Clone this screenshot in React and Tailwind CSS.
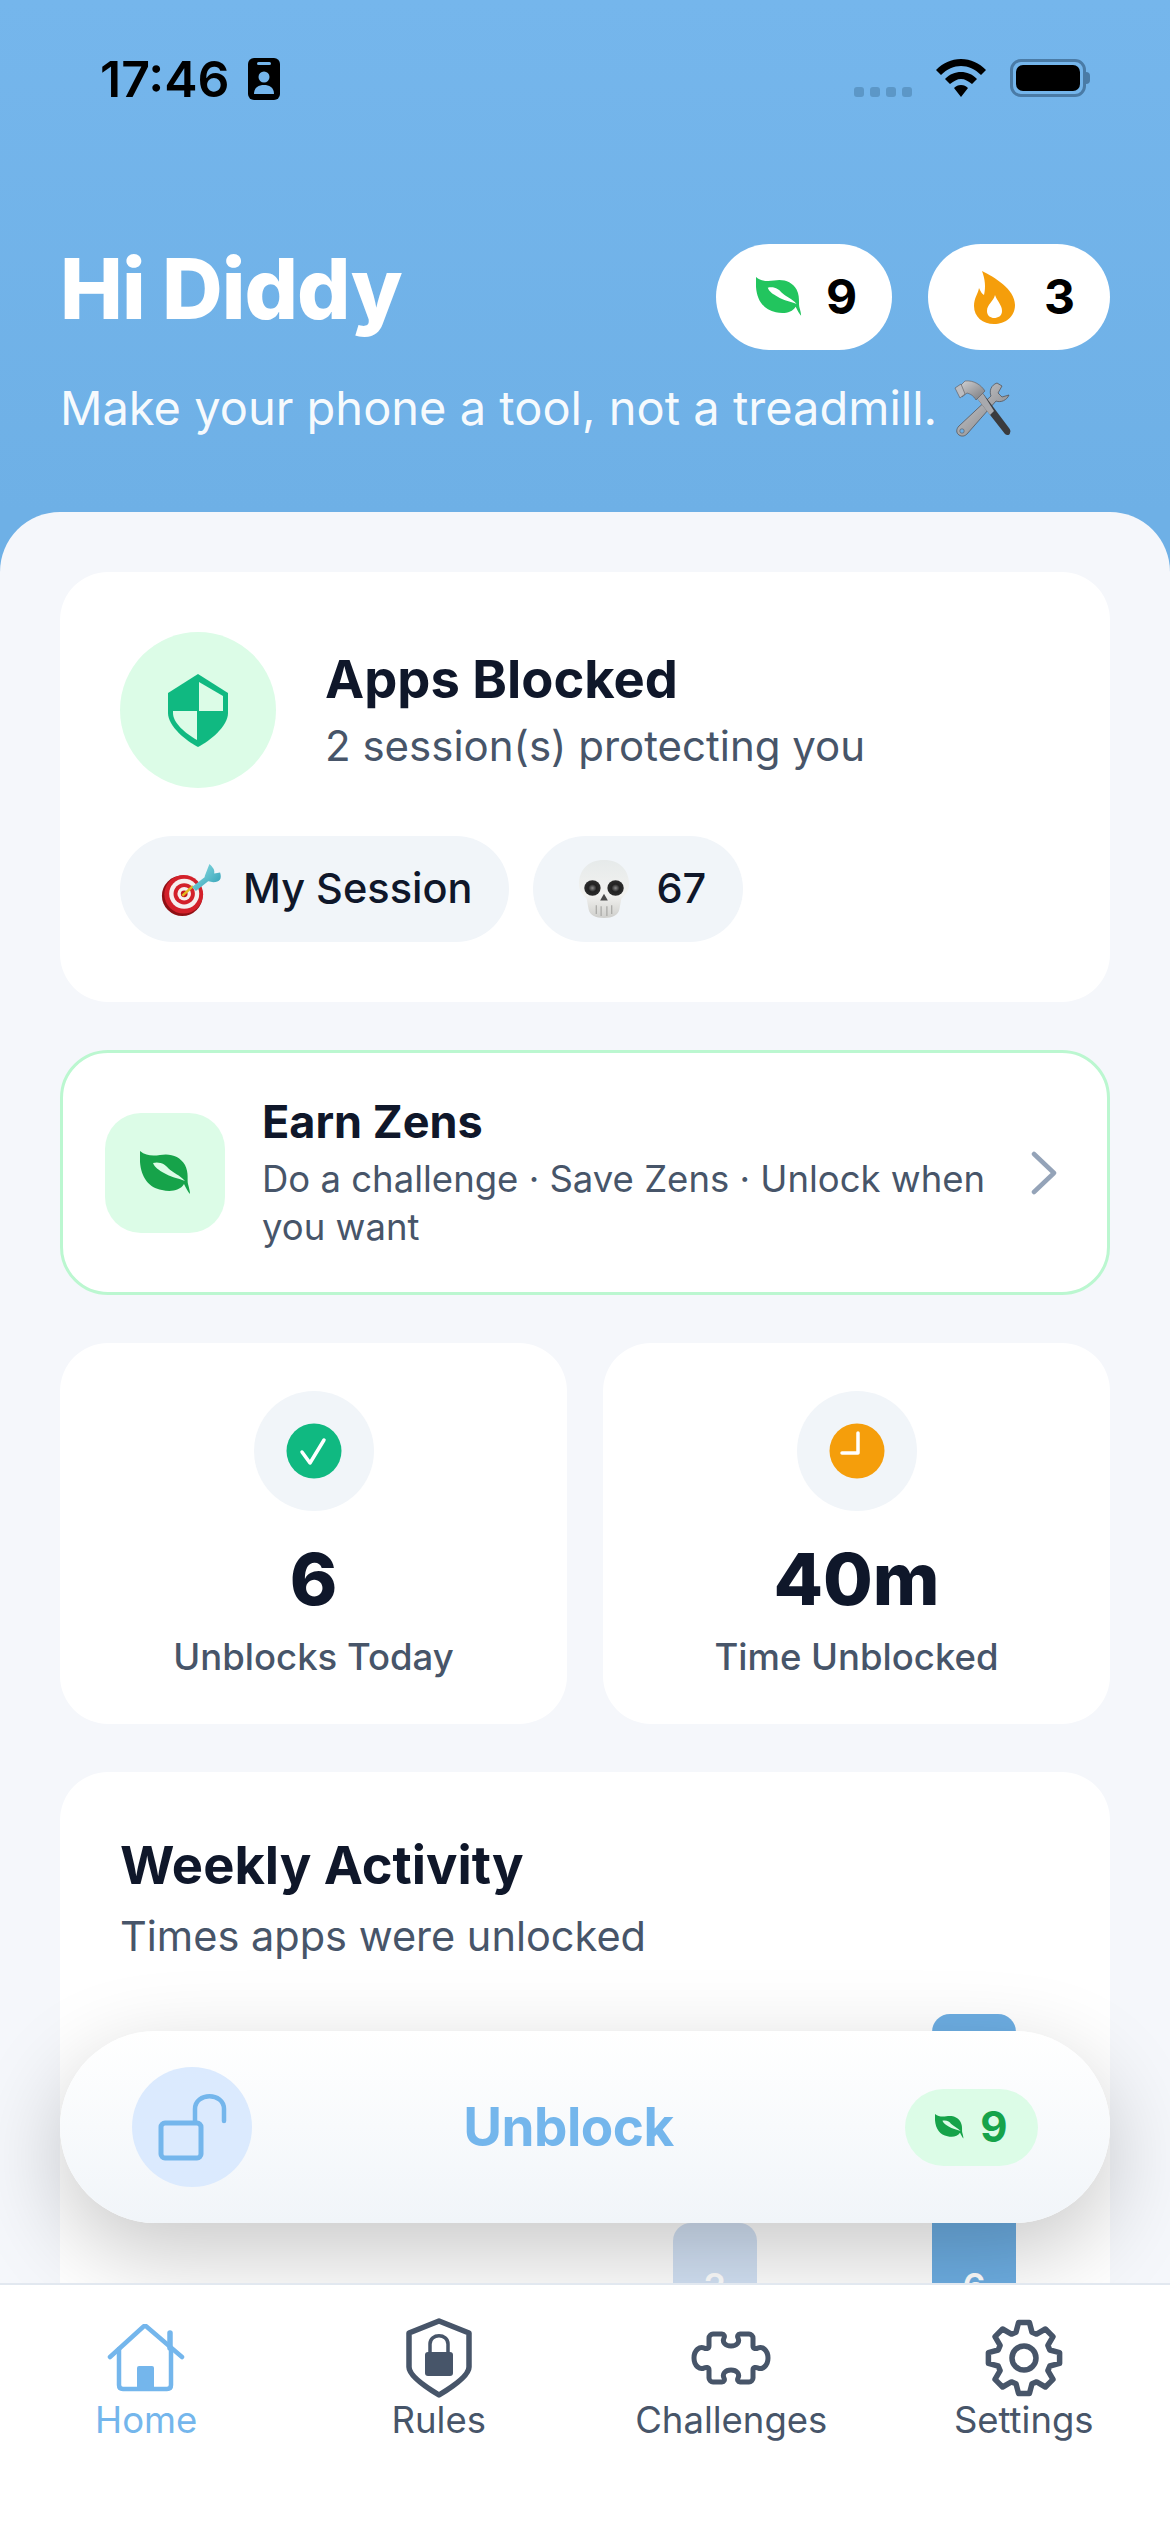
const LEAF_PATH = 'M0 0 C6 5 13 5 20 4 C30 2 40 5 45 14 C49 22 47 29 48 33 C49 37 50 40 50 43 C48 41 46 37 44 33 C40 40 30 41 22 39 C9 37 1 26 0 11 Z M13 12 C20 10 26 14 28 17 C33 22 40 24 45 30 C38 27 30 26 24 22 C19 19 15 17 13 12 Z';

const LeafIcon = ({ width, color }) => (
  <svg width={width} viewBox="0 0 51 44" className="shrink-0">
    <path d={LEAF_PATH} fill={color} fillRule="evenodd" />
  </svg>
);

const FlameIcon = () => (
  <svg width="41" height="53" viewBox="0 0 41 53" className="shrink-0">
    <path
      d="M8 0 C20 6 41 18 41 34 C41 46 31 53 20 53 C9 53 0 46 0 35 C0 27 4 23 5 17 C7 21 8 23 10 24 C12 16 11 8 8 0 Z M21 24 C20 30 13 33 13 40 C13 45 17 47 20 47 C24 47 28 45 28 40 C28 34 23 30 21 24 Z"
      fill="#f59e0b"
      fillRule="evenodd"
    />
  </svg>
);

const TargetEmoji = () => (
  <svg width="64" height="56" viewBox="0 0 66 58" preserveAspectRatio="none">
    <defs>
      <linearGradient id="fin" x1="0" y1="0" x2="1" y2="1">
        <stop offset="0" stopColor="#7fd4dc" />
        <stop offset="1" stopColor="#3aa6bb" />
      </linearGradient>
    </defs>
    <ellipse cx="24" cy="36" rx="21" ry="21" fill="#8f0f14" />
    <ellipse cx="25.5" cy="34.5" rx="20" ry="20" fill="#d3202a" />
    <circle cx="26" cy="34" r="15.5" fill="#f5efef" />
    <circle cx="26" cy="34" r="11" fill="#d3202a" />
    <circle cx="26" cy="34" r="7" fill="#f5efef" />
    <circle cx="26" cy="34" r="3.5" fill="#c4161f" />
    <path d="M24 36 L35 26" stroke="#e3b81f" strokeWidth="2.5" />
    <path d="M34 27 L48 16 L52 20 L38 31 Z" fill="url(#fin)" />
    <path d="M47 16 L52 3 Q58 8 57 13 L63 12 Q66 22 56 22 L51 21 Z" fill="url(#fin)" />
  </svg>
);

const SkullEmoji = () => (
  <svg width="52" height="60" viewBox="0 0 54 62">
    <defs>
      <linearGradient id="bone" x1="0" y1="0" x2="0" y2="1">
        <stop offset="0" stopColor="#e6eaea" />
        <stop offset="0.6" stopColor="#f2f2f0" />
        <stop offset="1" stopColor="#cfcfcc" />
      </linearGradient>
      <radialGradient id="eye">
        <stop offset="0" stopColor="#8a8a8a" />
        <stop offset="0.5" stopColor="#222" />
        <stop offset="1" stopColor="#2c2c2c" />
      </radialGradient>
    </defs>
    <path d="M27 1 C44 1 53 12 53 26 C53 33 49 37 45 41 L43 52 C42 58 36 61 27 61 C18 61 12 58 11 52 L9 41 C5 37 1 33 1 26 C1 12 10 1 27 1 Z" fill="url(#bone)" />
    <ellipse cx="15" cy="30" rx="8.5" ry="8" fill="url(#eye)" />
    <ellipse cx="39" cy="30" rx="8.5" ry="8" fill="url(#eye)" />
    <path d="M27 36 L31 43 H23 Z" fill="#4a4a4a" />
    <path d="M19 48 V57 M24 49 V59 M30 49 V59 M35 48 V57" stroke="#a9a9a6" strokeWidth="1.3" />
  </svg>
);

const ToolsEmoji = () => (
  <svg width="60" height="60" viewBox="0 0 60 60" className="shrink-0">
    <defs>
      <linearGradient id="steel" x1="0" y1="0" x2="1" y2="1">
        <stop offset="0" stopColor="#d6d6d8" />
        <stop offset="1" stopColor="#77787c" />
      </linearGradient>
    </defs>
    <path d="M45 5 C39 7 37 13 39 18 L7 48 C4 51 4 55 7 57 C10 59 13 58 15 56 L44 23 C49 25 55 22 57 17 L50 19 L46 15 L50 8 Z" fill="url(#steel)" stroke="#55565a" strokeWidth="0.8" />
    <circle cx="10" cy="53" r="2.2" fill="#6eb0e6" stroke="#55565a" strokeWidth="0.6" />
    <path d="M24 19 L53 56 C55 58 58 57 58 55 C59 53 58 51 57 50 L30 14 Z" fill="#3a3b3e" />
    <path d="M24 19 L38 37 L42 33 L30 14 Z" fill="#a8a9ad" />
    <path d="M5 11 L10 19 L15 15 C18 16 21 17 24 22 L33 13 C29 7 22 2 13 3 Z" fill="url(#steel)" stroke="#55565a" strokeWidth="0.6" />
    <path d="M3 10 L9 6 L13 16 L8 20 Z" fill="#bcbdc1" stroke="#55565a" strokeWidth="0.6" />
  </svg>
);

const ShieldIcon = () => (
  <svg width="62" height="75" viewBox="0 0 62 75">
    <path d="M31 1 L61 20 V40 C61 53 43 68 31 74 C19 68 1 53 1 40 V20 Z" fill="#10b981" />
    <path d="M32 9 L56 23 V38 H32 Z" fill="#dcfce7" />
    <path d="M6 38 H30 V67 C18 60 6 50 6 40 Z" fill="#dcfce7" />
  </svg>
);

const CheckIcon = () => (
  <svg width="56" height="56" viewBox="0 0 56 56">
    <circle cx="28" cy="28" r="27.5" fill="#10b981" />
    <path d="M16 29 L24 40 L38 17" fill="none" stroke="#fff" strokeWidth="3.5" strokeLinecap="round" strokeLinejoin="round" />
  </svg>
);

const ClockIcon = () => (
  <svg width="56" height="56" viewBox="0 0 56 56">
    <circle cx="28" cy="28" r="27.5" fill="#f59e0b" />
    <path d="M29 10 V30 H13" fill="none" stroke="#fff" strokeWidth="3.5" strokeLinecap="round" strokeLinejoin="round" />
  </svg>
);

const HomeIcon = () => (
  <svg width="78" height="69" viewBox="0 0 78 69" fill="none" stroke="#74b6ec" strokeWidth="4.5" strokeLinecap="round" strokeLinejoin="round">
    <path d="M3 33 L36 3 Q38 1 40 3 L75 33" />
    <path d="M12 25 V61 Q12 65 16 65 H60 Q64 65 64 61 V25" />
    <path d="M63 9 V24" strokeWidth="5.5" />
    <rect x="30" y="42" width="17" height="24" rx="2" fill="#74b6ec" stroke="none" />
  </svg>
);

const RulesIcon = () => (
  <svg width="70" height="80" viewBox="0 0 70 80" fill="none" stroke="#475569" strokeWidth="5.5" strokeLinejoin="round">
    <path d="M35 3 L65 15 V49 C65 58 45 71 35 77 C25 71 5 58 5 49 V15 Z" />
    <path d="M26 37 V26 C26 15 44 15 44 26 V37" strokeWidth="3.5" />
    <rect x="21" y="34" width="28" height="24" rx="3" fill="#475569" stroke="none" />
  </svg>
);

const PuzzleIcon = () => (
  <svg width="80" height="54" viewBox="0 0 80 54" fill="none" stroke="#475569" strokeWidth="5" strokeLinejoin="round">
    <path d="M22 3 H31 C33 3 34 5 33 7 C31 11 34 15 40 15 C46 15 49 11 47 7 C46 5 47 3 49 3 H58 C60 3 62 5 62 7 V15 C62 18 65 18 67 17 C71 15 77 19 77 27 C77 35 71 39 67 37 C65 36 62 36 62 39 V47 C62 49 60 51 58 51 H49 C47 51 46 49 47 47 C49 43 46 39 40 39 C34 39 31 43 33 47 C34 49 33 51 31 51 H22 C20 51 18 49 18 47 V39 C18 36 15 36 13 37 C9 39 3 35 3 27 C3 19 9 15 13 17 C15 18 18 18 18 15 V7 C18 5 20 3 22 3 Z" />
  </svg>
);

// eight teeth round the middle point
const gearPath = () => {
  const pts = [];
  for (let i = 0; i < 8; i++) {
    const a = (i * Math.PI) / 4 - Math.PI / 2;
    [[-0.3, 27], [-0.15, 36], [0.15, 36], [0.3, 27]].forEach(([da, r]) => {
      pts.push(`${(39 + r * Math.cos(a + da)).toFixed(1)} ${(39 + r * Math.sin(a + da)).toFixed(1)}`);
    });
  }
  return `M${pts.join(' L')} Z`;
};

const GearIcon = () => (
  <svg width="78" height="78" viewBox="0 0 78 78" fill="none" stroke="#475569" strokeWidth="5.5" strokeLinejoin="round">
    <path d={gearPath()} />
    <circle cx="39" cy="39" r="12" />
  </svg>
);

const OpenLockIcon = () => (
  <svg width="72" height="68" viewBox="0 0 72 68" fill="none" stroke="#74b6ec" strokeWidth="5" strokeLinecap="round" strokeLinejoin="round">
    <rect x="3" y="30" width="40" height="35" rx="4" />
    <path d="M37 28 V16 C37 -1 66 -1 66 16 V28" strokeWidth="4.5" />
  </svg>
);

const SessionChip = ({ emoji, label }) => (
  <div className="flex h-[106px] items-center gap-[19px] rounded-full bg-[#f1f5f9] pl-[38px] pr-[37px]">
    <div className="flex w-[66px] items-center justify-center">{emoji}</div>
    <span className="text-[41.5px] font-medium leading-none text-[#0f172a]">{label}</span>
  </div>
);

const StatCard = ({ icon, value, label }) => (
  <div className="flex h-[381px] flex-col items-center rounded-[48px] bg-white pt-[48px]">
    <div className="flex size-[120px] items-center justify-center rounded-full bg-[#f1f5f9]">{icon}</div>
    <div className="mt-[24px] text-[72px] font-extrabold leading-[88px] text-[#0f172a]">{value}</div>
    <div className="mt-[12px] text-[36.5px] font-medium leading-[44px] text-[#475569]">{label}</div>
  </div>
);

const NavItem = ({ icon, label, active }) => (
  <div className="flex flex-col items-center">
    <div className="flex h-[82px] items-center justify-center">{icon}</div>
    <span className={`-mt-[1px] text-[36.5px] leading-[44px] ${active ? 'text-[#74b6ec]' : 'text-[#475569]'}`}>{label}</span>
  </div>
);

const bars = [0, 0, 0, 0, 2, 0, 6];

export default function App() {
  return (
    <div className="flex h-[2532px] w-[1170px] flex-col overflow-hidden bg-[#6eb0e6] font-['Inter',sans-serif]">
      {/* Header */}
      <header className="h-[512px] shrink-0 bg-gradient-to-b from-[#75b6ec] to-[#6eb0e6] px-[60px]">
        <div className="flex h-[156px] items-start justify-between pl-[40px] pr-[20px] pt-[53px]">
          <div className="flex items-center gap-[18px]">
            <span className="text-[50px] font-semibold leading-[52px] text-black">17:46</span>
            <svg width="32" height="42" viewBox="0 0 32 42">
              <rect width="32" height="42" rx="6" fill="#000" />
              <rect x="9" y="4" width="14" height="3" rx="1.5" fill="#75b6ec" />
              <circle cx="16" cy="19" r="5.5" fill="#75b6ec" />
              <path d="M6 36 C6 29 11 27 16 27 C21 27 26 29 26 36 Z" fill="#75b6ec" />
            </svg>
          </div>
          <div className="flex items-end gap-[24px] pt-[6px]">
            <div className="flex gap-[6px]">
              {[0, 1, 2, 3].map(i => <div key={i} className="h-[10px] w-[10px] rounded-[3px] bg-[#5c97c7]" />)}
            </div>
            <svg width="50" height="38" viewBox="0 0 50 38">
              <path d="M25 0 C35 0 43 4 50 11 L45 16 C39 10 32 7 25 7 C18 7 11 10 5 16 L0 11 C7 4 15 0 25 0 Z M25 13 C31 13 36 15 41 20 L36 25 C32 22 29 20 25 20 C21 20 18 22 14 25 L9 20 C14 15 19 13 25 13 Z M25 26 C28 26 30 27 32 29 L25 38 L18 29 C20 27 22 26 25 26 Z" fill="#000" />
            </svg>
            <div className="flex items-center">
              <div className="flex h-[38px] w-[76px] items-center justify-center rounded-[11px] border-[3px] border-[#4a7ba6]">
                <div className="h-[26px] w-[64px] rounded-[7px] bg-black" />
              </div>
              <div className="h-[12px] w-[4px] rounded-r-full bg-[#4a7ba6]" />
            </div>
          </div>
        </div>
        <div className="mt-[88px] flex items-center justify-between">
          <h1 className="mb-[16px] text-[84px] font-extrabold leading-[90px] tracking-[-1px] text-white">Hi Diddy</h1>
          <div className="flex gap-[36px]">
            <div className="flex h-[106px] w-[176px] items-center gap-[24px] rounded-full bg-white pl-[40px]">
              <LeafIcon width={46} color="#22c55e" />
              <span className="text-[48px] font-bold leading-none text-black">9</span>
            </div>
            <div className="flex h-[106px] w-[182px] items-center gap-[29px] rounded-full bg-white pl-[46px]">
              <FlameIcon />
              <span className="text-[48px] font-bold leading-none text-black">3</span>
            </div>
          </div>
        </div>
        <div className="mt-[28px] flex items-center gap-[15px]">
          <p className="text-[47px] leading-[60px] text-white/95">Make your phone a tool, not a treadmill.</p>
          <ToolsEmoji />
        </div>
      </header>

      {/* Sheet */}
      <main className="relative flex-1 overflow-hidden rounded-t-[60px] bg-[#f5f7fb] px-[60px] pt-[60px]">
        <div className="flex flex-col gap-[48px]">
          <section className="h-[430px] rounded-[48px] bg-white p-[60px]">
            <div className="flex items-center gap-[49px]">
              <div className="flex size-[156px] shrink-0 items-center justify-center rounded-full bg-[#dcfce7]">
                <ShieldIcon />
              </div>
              <div>
                <h2 className="text-[52.5px] font-bold leading-[62px] text-[#0f172a]">Apps Blocked</h2>
                <p className="mt-[10px] text-[42px] leading-[52px] text-[#475569]">2 session(s) protecting you</p>
              </div>
            </div>
            <div className="mt-[48px] flex gap-[24px]">
              <SessionChip emoji={<TargetEmoji />} label="My Session" />
              <SessionChip emoji={<SkullEmoji />} label="67" />
            </div>
          </section>

          <section className="flex h-[245px] items-center rounded-[48px] border-[3px] border-[#bbf7d0] bg-white pl-[42px] pr-[49px]">
            <div className="flex size-[120px] shrink-0 items-center justify-center rounded-[36px] bg-[#dcfce7]">
              <LeafIcon width={51} color="#16a34a" />
            </div>
            <div className="ml-[37px] min-w-0 flex-1">
              <h3 className="text-[45px] font-bold leading-[54px] text-[#0f172a]">Earn Zens</h3>
              <p className="mt-[6px] w-[745px] text-[36.5px] leading-[48px] text-[#475569]">Do a challenge · Save Zens · Unlock when you want</p>
            </div>
            <svg width="28" height="44" viewBox="0 0 28 44" fill="none" stroke="#94a3b8" strokeWidth="4.5" strokeLinecap="round" strokeLinejoin="round" className="shrink-0">
              <path d="M4 3 L24 22 L4 41" />
            </svg>
          </section>

          <section className="grid grid-cols-2 gap-[36px]">
            <StatCard icon={<CheckIcon />} value="6" label="Unblocks Today" />
            <StatCard icon={<ClockIcon />} value="40m" label="Time Unblocked" />
          </section>

          <section className="rounded-[48px] bg-white pt-[60px]">
            <div className="px-[60px]">
              <h2 className="text-[52.5px] font-bold leading-[66px] text-[#0f172a]">Weekly Activity</h2>
              <p className="mt-[12px] text-[41.5px] leading-[52px] text-[#475569]">Times apps were unlocked</p>
            </div>
            <div className="mt-[52px] flex h-[314px] items-end justify-between px-[94px]">
              {bars.map((count, i) => (
                <div key={i} className="w-[84px]">
                  {count > 0 && (
                    <div
                      className={`flex flex-col items-center justify-end rounded-t-[18px] pb-[27px] text-[36px] font-semibold leading-[30px] text-white ${count === 6 ? 'bg-[#6daee3]' : 'bg-[#d3e2f5]'}`}
                      style={{ height: count * 52.3 }}
                    >
                      {count}
                    </div>
                  )}
                </div>
              ))}
            </div>
          </section>
        </div>

        {/* Floating unblock button */}
        <div className="absolute bottom-[60px] left-[60px] flex h-[192px] w-[1050px] items-center rounded-full bg-gradient-to-b from-white to-[#f1f5f9] pl-[72px] pr-[72px] shadow-[0_30px_90px_rgba(0,0,0,0.22)]">
          <div className="flex size-[120px] items-center justify-center rounded-full bg-[#dbeafe] pl-[4px]">
            <OpenLockIcon />
          </div>
          <span className="mr-[20px] flex-1 text-center text-[53px] font-bold leading-none tracking-[-0.5px] text-[#74b6ec]">Unblock</span>
          <div className="flex h-[77px] w-[133px] items-center justify-center gap-[16px] rounded-full bg-[#dcfce7]">
            <LeafIcon width={29} color="#16a34a" />
            <span className="text-[42px] font-bold leading-none text-[#16a34a]">9</span>
          </div>
        </div>
      </main>

      {/* Tab bar */}
      <nav className="relative grid h-[249px] shrink-0 grid-cols-4 border-t-[2px] border-[#e2e8f0] bg-white pt-[32px]">
        <NavItem active icon={<HomeIcon />} label="Home" />
        <NavItem icon={<RulesIcon />} label="Rules" />
        <NavItem icon={<PuzzleIcon />} label="Challenges" />
        <NavItem icon={<GearIcon />} label="Settings" />
      </nav>
    </div>
  );
}
